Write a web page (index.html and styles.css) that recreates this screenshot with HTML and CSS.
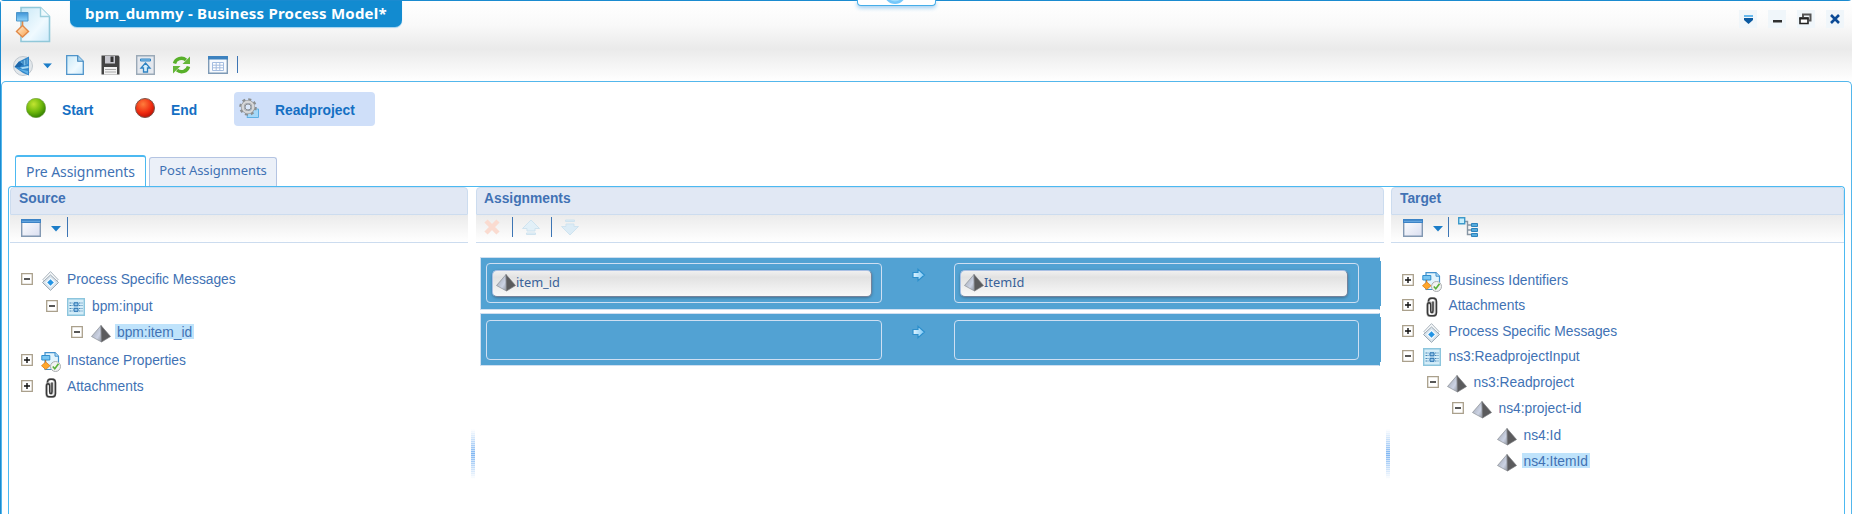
FILE: index.html
```html
<!DOCTYPE html>
<html lang="en">
<head>
<meta charset="utf-8">
<title>bpm_dummy - Business Process Model</title>
<link rel="stylesheet" href="styles.css">
</head>
<body>
<svg class="defs" width="0" height="0">
<defs>
<linearGradient id="paper" x1="0" y1="0" x2="1" y2="1"><stop offset="0" stop-color="#c9e8f6"/><stop offset=".6" stop-color="#f0faff"/><stop offset="1" stop-color="#cdeafa"/></linearGradient>
<linearGradient id="blue" x1="0" y1="0" x2="0" y2="1"><stop offset="0" stop-color="#3f93d6"/><stop offset="1" stop-color="#8fd5fb"/></linearGradient>
<linearGradient id="orange" x1="0" y1="0" x2="1" y2="1"><stop offset="0" stop-color="#fff0d8"/><stop offset="1" stop-color="#f9a04a"/></linearGradient>
<linearGradient id="face" x1="0" y1="0" x2="1" y2="1"><stop offset="0" stop-color="#9aa0aa"/><stop offset=".65" stop-color="#ccd3e4"/><stop offset="1" stop-color="#8d929c"/></linearGradient>
<linearGradient id="winfill" x1="0" y1="0" x2="1" y2="1"><stop offset="0" stop-color="#fff"/><stop offset="1" stop-color="#d9def0"/></linearGradient>
<radialGradient id="green" cx=".38" cy=".3" r=".75"><stop offset="0" stop-color="#c3e531"/><stop offset=".55" stop-color="#6fb80c"/><stop offset="1" stop-color="#2c7a00"/></radialGradient>
<radialGradient id="red" cx=".4" cy=".3" r=".75"><stop offset="0" stop-color="#ff7d3c"/><stop offset=".6" stop-color="#f02c10"/><stop offset="1" stop-color="#b50d04"/></radialGradient>
<linearGradient id="arrowfill"><stop offset="0" stop-color="#e0f4ff"/><stop offset="1" stop-color="#7cc8f6"/></linearGradient>
<symbol id="pyramid" viewBox="0 0 20 18"><path d="M10 .5 .5 11.500 10.500 17z" fill="url(#face)" stroke="#8b8f96" stroke-width=".7"/><path d="M10 .5 19.500 11.500 10.500 17z" fill="#5b5b5d" stroke="#77797d" stroke-width=".7"/></symbol>
<symbol id="plus" viewBox="0 0 12 12"><path d="M.7.7h10.600v10.600H.7z" fill="#fff" stroke="#aaa08c" stroke-width="1.300"/><path d="M3 6h6M6 3v6" stroke="#111" stroke-width="1.400"/></symbol>
<symbol id="minus" viewBox="0 0 12 12"><path d="M.7.7h10.600v10.600H.7z" fill="#fff" stroke="#aaa08c" stroke-width="1.300"/><path d="M3 6h6" stroke="#111" stroke-width="1.400"/></symbol>
<symbol id="message" viewBox="0 0 20 20"><path d="M9.500 .6 17 8.500 9.500 16 2 8.500z" fill="#f7f9fa" stroke="#a9b3bc"/><path d="M9.500 4 17.500 11.500 9.500 19.300 1.500 11.500z" fill="#dfe8ef" stroke="#94a2af"/><path d="M9.500 6 15 11.500 9.500 17 4 11.500z" fill="#f6fbff" stroke="#d0dbe4" stroke-width=".7"/><path d="M9.500 8.200 12.800 11.500 9.500 14.800 6.200 11.500z" fill="#2494e4"/></symbol>
<symbol id="part" viewBox="0 0 18 18"><path d="M.7.7h16.600v16.600H.7z" fill="#d5edf8" stroke="#8cc5dd" stroke-width="1.400"/><path d="M2.500 5h13M2.500 7.500h13M2.500 10.500h13M2.500 13h13" stroke="#4687b8" stroke-width="1.100" stroke-dasharray="2 1"/><path d="M6 3.500h6v11H6z" fill="#c5e2f4"/><path d="M7 4.800h4v3H7zM7 10.300h4v3H7z" fill="#9bc9eb" stroke="#246ead"/></symbol>
<symbol id="clip" viewBox="0 0 20 20"><path d="M6.500 6V4Q7 1 10 1h1q3 0 3 3v12q0 3-3 3H8.500Q5.500 19 5.500 15.500V8q0-2.500 2-2.500T9.500 8v6q0 1.500 .8 1.500T11 14V4.500" fill="none" stroke="#b5b5b5" stroke-width="2.500"/><path d="M6.500 4.500Q6.500 1.200 9.500 1.200h1.500q3.500 0 3.500 3.500v10.800q0 3.300-3 3.300H8.500q-3 0-3-3.300V8q0-2.200 1.500-2.200T8.600 8v5.500q0 2 1.200 2t1.200-2V4.500" fill="none" stroke="#383838" stroke-width="1.400"/></symbol>
<symbol id="props" viewBox="0 0 20 20"><path d="M4 .7h10l3.500 3.500v13.300H4z" fill="#e2f4fd" stroke="#4291cd" stroke-width="1.200"/><path d="M14 .7v3.500h3.500" fill="#bbe1f7" stroke="#4291cd"/><path d="M.8 3.500h8V8h-8z" fill="#79c6f2" stroke="#308dcc"/><path d="M4.700 8v3" fill="none" stroke="#b86b20"/><path d="M4.700 10 9 13.700 4.700 17.500 .5 13.700z" fill="#ffa72c" stroke="#dd7c1c" stroke-width=".8"/><circle cx="14.500" cy="14.500" r="5" fill="#f2f2f2" stroke="#a9adaf"/><path d="m11.800 14.500 2 2.300 3.700-5" fill="none" stroke="#59b13a" stroke-width="1.600"/></symbol>
<symbol id="window" viewBox="0 0 20 18"><path d="M.7.700h18.600v16.600H.7z" fill="url(#winfill)" stroke="#8298b2" stroke-width="1.400"/><path d="M0 0h20v4H0z" fill="#3c83c6"/><path d="M1 2.300h18" stroke="#6eaee4"/></symbol>
<symbol id="caret" viewBox="0 0 10 6"><path d="M0 0h10L5 5.500z" fill="#1c7dc8"/></symbol>
<symbol id="arrow" viewBox="0 0 14 14"><path d="M1 4.500h5V1.300L12.500 7 6 12.700V9.500H1z" fill="url(#arrowfill)" stroke="#2d8fcc" stroke-width="1.200"/></symbol>
</defs>
</svg>
<div class="app">
  <header class="head">
    <div class="head-main">
      <svg class="doc-logo" width="37" height="38" viewBox="0 0 37 38"><path d="M6 1.500h19.500l9 9V35.500H6z" fill="url(#paper)" stroke="#91c8d9" stroke-width="1.600"/><path d="M25.500 1.500v9h9" fill="#eef9fd" stroke="#9ccfdd" stroke-width="1.400"/><path d="M7.500 15v7" stroke="#e18a49" stroke-width="1.600"/><path d="M1.500 6.500h11.500v8.500H1.500z" fill="url(#blue)" stroke="#4e96ca"/><path d="M7.500 19.500 13.500 25.500 7.500 31 1.500 25.500z" fill="url(#orange)" stroke="#e18a49" stroke-width="1.400"/></svg>
      <h1 class="title">bpm_dummy - Business Process Model*</h1>
      <div class="handle"><svg width="20" height="5" viewBox="0 0 20 5"><circle cx="10" cy="-7" r="11" fill="#74c7fa"/><circle cx="10" cy="-7" r="8.500" fill="#9bdafc"/></svg></div>
      <div class="win-tools">
        <svg width="18" height="18" viewBox="0 0 18 18"><path d="M5 5h9v2H5z" fill="#68b8ec"/><path d="M5 8h9v2l-4.500 4L5 10z" fill="#0a59a0"/></svg>
        <svg width="18" height="18" viewBox="0 0 18 18"><path d="M5 10h9v2.500H5z" fill="#303030"/></svg>
        <svg width="18" height="18" viewBox="0 0 18 18"><path d="M6 7V4.500h7.500v6H12" fill="none" stroke="#555" stroke-width="2"/><path d="M3 8h8v5.500H3z" fill="#fff" stroke="#222" stroke-width="1.600"/><path d="M2.500 8.500h9" stroke="#222" stroke-width="2"/></svg>
        <svg width="18" height="18" viewBox="0 0 18 18"><path d="m5 5 8 8M13 5l-8 8" stroke="#0b4a96" stroke-width="2.600"/></svg>
      </div>
    </div>
    <div class="tools">
      <svg class="t-logo" width="20" height="20" viewBox="0 0 20 20"><circle cx="10" cy="10" r="9.500" fill="#e2e7eb" stroke="#bfc7ce"/><path d="M1.500 11 6 5.500 16 .5V19.500L10 17z" fill="#3286c9"/><path d="M1.500 11 6 5.500 10 8 7 11z" fill="#1c66a9"/><path d="M8 6 14.500 2.500V8L11 9.500z" fill="#79bfe9"/><path d="M7 11.500 15.500 10v2L9.500 13z" fill="#a9dbf5"/><path d="M4.500 12.500 15 15v3z" fill="#5fb1e6"/><path d="M10 4.500v5M13 3v5.500" stroke="#1c66a9"/></svg>
      <svg class="t-caret" width="9" height="6" viewBox="0 0 10 6"><use href="#caret"/></svg>
      <svg class="t-new" width="18" height="20" viewBox="0 0 18 20"><path d="M.7.7h11l5.600 5.600v13H.7z" fill="url(#paper)" stroke="#4f94ca" stroke-width="1.300"/><path d="M11.700.700v5.600h5.600" fill="#a8d2ee" stroke="#4287bd" stroke-width="1.100"/></svg>
      <svg class="t-save" width="19" height="20" viewBox="0 0 19 20"><path d="M.5.500h17l1 1.500v17.500H.5z" fill="#444"/><path d="M4 1h10v7.500H4z" fill="#c8c8cf"/><path d="M9.500 1.500h3V7h-3z" fill="#333"/><path d="M3 12h13v7.500H3z" fill="#f2f2f2"/><path d="M4 14.500h11M4 17h11" stroke="#aaa"/></svg>
      <svg class="t-up" width="19" height="20" viewBox="0 0 19 20"><path d="M.7.7h17.600v18.600H.7z" fill="#e4e8ee" stroke="#9aa9b7" stroke-width="1.400"/><path d="M4.500 4h10v2h-10z" fill="#8cc6ef" stroke="#3587c5"/><path d="m9.500 8 4.500 5h-2.500v4h-4v-4H5z" fill="#d8f0fd" stroke="#2e82c2" stroke-width="1.300"/></svg>
      <svg class="t-refresh" width="19" height="18" viewBox="0 0 19 18"><path d="M2.500 7.500A7 6.500 0 0 1 14 4" fill="none" stroke="#58b02a" stroke-width="3.400"/><path d="M18 .5V8h-7.500z" fill="#65b739"/><path d="M16.500 10.500A7 6.500 0 0 1 5 14" fill="none" stroke="#58b02a" stroke-width="3.400"/><path d="M1 17.500V10h7.500z" fill="#65b739"/></svg>
      <svg class="t-cal" width="20" height="18" viewBox="0 0 20 18"><path d="M.7.700h18.600v16.600H.7z" fill="#f7fafe" stroke="#7e9ab6" stroke-width="1.400"/><path d="M0 0h20v3.500H0z" fill="#3d82bf"/><path d="M4.500 6.500h11v8h-11zM8.200 6.500v8M11.800 6.500v8M4.500 9.200h11M4.500 11.800h11" fill="#fff" stroke="#a4bde0"/></svg>
      <i class="sep"></i>
    </div>
  </header>
  <main class="body">
    <nav class="steps">
      <span class="step start"><svg width="20" height="20"><circle cx="10" cy="10" r="9.700" fill="url(#green)" stroke="#6d9a43" stroke-width=".6"/></svg>Start</span>
      <span class="step end"><svg width="20" height="20"><circle cx="10" cy="10" r="9.500" fill="url(#red)" stroke="#7c554a"/></svg>End</span>
      <span class="step active"><svg width="21" height="21" viewBox="0 0 21 21"><path d="M10 11h9.500v8.500H8z" fill="#a5d8f8" stroke="#5fb0e3"/><circle cx="9" cy="9" r="7.600" fill="none" stroke="#8b8f91" stroke-width="2.400" stroke-dasharray="3 2.970"/><circle cx="9" cy="9" r="5.300" fill="none" stroke="#909294" stroke-width="3.600"/><circle cx="9" cy="9" r="5.300" fill="none" stroke="#d6d7d8" stroke-width="2.400"/><circle cx="9" cy="9" r="3" fill="#dbe8fa" stroke="#8d8f91"/></svg>Readproject</span>
    </nav>
    <div class="tabs"><span class="tab on">Pre Assignments</span><span class="tab">Post Assignments</span></div>
    <div class="panels">
      <section class="panel source">
        <h2>Source</h2>
        <div class="bar"><svg class="b-win" width="20" height="18"><use href="#window"/></svg><svg class="b-caret" width="10" height="6"><use href="#caret"/></svg><i class="sep"></i></div>
        <ul class="tree">
          <li class="r27"><svg class="ex"><use href="#minus"/></svg><svg class="ic"><use href="#message"/></svg><span>Process Specific Messages</span></li>
          <li class="l1 r26"><svg class="ex"><use href="#minus"/></svg><svg class="ic part"><use href="#part"/></svg><span>bpm:input</span></li>
          <li class="l2 r28"><svg class="ex"><use href="#minus"/></svg><svg class="ic pyr"><use href="#pyramid"/></svg><span class="sel">bpm:item_id</span></li>
          <li class="r26"><svg class="ex"><use href="#plus"/></svg><svg class="ic"><use href="#props"/></svg><span>Instance Properties</span></li>
          <li class="r26"><svg class="ex"><use href="#plus"/></svg><svg class="ic"><use href="#clip"/></svg><span>Attachments</span></li>
        </ul>
      </section>
      <div class="split"><i></i></div>
      <section class="panel assign">
        <h2>Assignments</h2>
        <div class="bar">
          <svg class="b-del" width="16" height="16" viewBox="0 0 16 16"><path d="m2 2 12 12M14 2 2 14" stroke="#fadbd0" stroke-width="4.500"/></svg><i class="sep"></i>
          <svg class="b-up" width="20" height="17" viewBox="0 0 20 17"><path d="m10 1 8.500 8.500H14V12H6V9.500H1.500zM5.500 14h9v1.500h-9z" fill="#e2f0f8" stroke="#cfe3ef"/></svg><i class="sep"></i>
          <svg class="b-down" width="20" height="17" viewBox="0 0 20 17"><path d="m10 16 8.500-8.500H14V5H6v2.500H1.500zM5.500 1h9v1.500h-9z" fill="#dcecf6" stroke="#cfe3ef"/></svg>
        </div>
        <div class="rows">
          <div class="map"><div class="slot"><div class="pill"><svg width="20" height="18"><use href="#pyramid"/></svg>item_id</div></div><svg class="arr" width="14" height="14"><use href="#arrow"/></svg><div class="slot to"><div class="pill"><svg width="20" height="18"><use href="#pyramid"/></svg>ItemId</div></div></div>
          <div class="map empty"><div class="slot"></div><svg class="arr" width="14" height="14"><use href="#arrow"/></svg><div class="slot to"></div></div>
        </div>
      </section>
      <div class="split narrow"><i></i></div>
      <section class="panel target">
        <h2>Target</h2>
        <div class="bar"><svg class="b-win" width="20" height="18"><use href="#window"/></svg><svg class="b-caret" width="10" height="6"><use href="#caret"/></svg><i class="sep"></i><svg class="b-tree" width="20" height="20" viewBox="0 0 20 20"><path d="M7 4.500h2.500v13H14M9.500 8H14M9.500 13H14" fill="none" stroke="#8594a2" stroke-width="1.400"/><path d="M.700.700h6v6h-6z" fill="#c7effd" stroke="#3d99ca" stroke-width="1.400"/><path d="M13.500 6.500h6v3h-6zM13.500 11.500h6v3h-6zM13.500 16.500h6v3h-6z" fill="#55abdc" stroke="#2e83bd"/></svg></div>
        <ul class="tree">
          <li class="r25"><svg class="ex"><use href="#plus"/></svg><svg class="ic"><use href="#props"/></svg><span>Business Identifiers</span></li>
          <li class="r26"><svg class="ex"><use href="#plus"/></svg><svg class="ic"><use href="#clip"/></svg><span>Attachments</span></li>
          <li class="r25"><svg class="ex"><use href="#plus"/></svg><svg class="ic"><use href="#message"/></svg><span>Process Specific Messages</span></li>
          <li class="r26"><svg class="ex"><use href="#minus"/></svg><svg class="ic part"><use href="#part"/></svg><span>ns3:ReadprojectInput</span></li>
          <li class="l1 r26"><svg class="ex"><use href="#minus"/></svg><svg class="ic pyr"><use href="#pyramid"/></svg><span>ns3:Readproject</span></li>
          <li class="l2 r27"><svg class="ex"><use href="#minus"/></svg><svg class="ic pyr"><use href="#pyramid"/></svg><span>ns4:project-id</span></li>
          <li class="l3 r26"><svg class="ex"></svg><svg class="ic pyr"><use href="#pyramid"/></svg><span>ns4:Id</span></li>
          <li class="l3 r26"><svg class="ex"></svg><svg class="ic pyr"><use href="#pyramid"/></svg><span class="sel">ns4:ItemId</span></li>
        </ul>
      </section>
    </div>
  </main>
</div>
</body>
</html>
```
FILE: styles.css
```css
* { box-sizing: border-box; }
body { margin: 0; background: #fff; overflow: hidden; font: 13.8px "Liberation Sans", Arial, sans-serif; color: #4172b4; }
svg { display: block; flex: none; }
.defs { position: absolute; }
.app { height: 514px; border-top: 1px solid #1b8bd0; border-left: 1px solid #1b8bd0; border-radius: 4px 4px 0 0; display: flex; flex-direction: column; }
.head { height: 80px; background: linear-gradient(#fff 0, #f9f9f9 30%, #eaeaea 60%, #f2f2f2 75%, #fff 100%); }
.head-main { display: flex; height: 50px; position: relative; }
.doc-logo { margin: 5px 0 0 14px; }
.title { margin: 0 0 0 18px; width: 332px; height: 26px; border-radius: 0 0 7px 7px; background: #128bd0; color: #fff; font: bold 15px/25px "Noto Sans", sans-serif; letter-spacing: .22px; padding-left: 15px; white-space: nowrap; box-shadow: 0 1px 1px #9fd2f0; }
.handle { position: absolute; left: 856px; top: -1px; width: 79px; height: 6px; background: #fff; border: 1px solid #46aee9; border-top: 0; border-radius: 0 0 4px 4px; box-shadow: 0 2px 4px #9fcdf0; padding-left: 27px; }
.win-tools { margin-left: auto; display: flex; gap: 11px; padding: 9px 8px 0 0; }
.win-tools svg { background: #f0f6fa; }
.tools { display: flex; height: 30px; align-items: flex-start; }
.t-logo { margin: 5px 0 0 12px; }
.t-caret { margin: 12px 0 0 10px; }
.t-new { margin: 4px 0 0 14px; }
.t-save { margin: 4px 0 0 17px; }
.t-up { margin: 4px 0 0 16px; }
.t-refresh { margin: 5px 0 0 17px; }
.t-cal { margin: 5px 0 0 17px; }
.sep { width: 1px; height: 20px; background: #3d75b4; flex: none; }
.tools .sep { margin: 5px 0 0 9px; height: 17px; }
.body { flex: 1; min-height: 0; border: 1px solid #53b7ec; border-bottom: 0; border-radius: 5px 5px 0 0; background: #fff; display: flex; flex-direction: column; }
.steps { display: flex; height: 73px; padding: 10px 0 0 24px; font-weight: bold; color: #146fc3; }
.step { display: flex; height: 34px; line-height: 38px; }
.step svg { margin-top: 6px; }
.start { width: 109px; gap: 16px; }
.end { width: 99px; gap: 16px; }
.active { width: 141px; background: #cfdff9; border-radius: 4px; gap: 15px; padding-left: 5px; }
.tabs { display: flex; align-items: flex-end; gap: 3px; padding-left: 13px; height: 31px; font: 13px "Noto Sans", sans-serif; letter-spacing: -.08px; }
.tab { border: 1px solid #b4c4e2; border-bottom: 0; background: #ebf0f8; border-radius: 3px 3px 0 0; width: 128px; height: 29px; line-height: 24px; text-align: center; white-space: nowrap; }
.tab.on { border: 1px solid #4cb9f1; border-top-width: 2px; border-bottom: 0; background: #fff; width: 131px; height: 31px; line-height: 30px; font-size: 14px; }
.panels { flex: 1; min-height: 0; margin: 0 6px; border: 1px solid #4cb9f1; border-bottom: 0; border-radius: 4px 4px 0 0; display: flex; padding-left: 1px; }
.panel h2 { margin: 0; height: 28px; background: #e1e8f4; border: 1px solid #ccdcef; border-radius: 4px 4px 0 0; font: bold 13.8px/22px "Liberation Sans", Arial, sans-serif; padding-left: 8px; }
.source { width: 458px; }
.assign { width: 908px; }
.assign h2 { padding-left: 7px; }
.target { flex: 1; }
.target h2 { padding-left: 8px; }
.bar { height: 28px; background: linear-gradient(#ebebeb, #fff); border-bottom: 1px solid #ccdcef; display: flex; align-items: flex-start; }
.bar .sep { margin-top: 2px; }
.b-win { margin: 4px 0 0 11px; }
.b-caret { margin: 11px 6px 0 10px; }
.target .b-win { margin-left: 12px; }
.target .b-caret { margin-right: 5px; }
.b-tree { margin: 2px 0 0 9px; }
.b-del { margin: 4px 12px 0 8px; }
.b-up { margin: 4px 10px 0 9px; }
.assign .sep + .b-up { margin-left: 8px; }
.b-down { margin: 4px 0 0 8px; }
.split { width: 8px; padding: 242px 0 0 3px; }
.split.narrow { width: 7px; padding-left: 2px; }
.split i { display: block; width: 4px; height: 50px; background: repeating-linear-gradient(#fff0 0 1px, #fff8 1px 2px), linear-gradient(#fff, #7db5f2 50%, #fff); }
.tree { list-style: none; margin: 0; padding: 23px 0 0 11px; }
.tree li { display: flex; height: 26px; white-space: nowrap; }
.target .tree { padding: 24px 0 0 11px; }
.tree .r25 { height: 25px; }
.tree .r27 { height: 27px; }
.tree .r28 { height: 28px; }
.tree .l1 { padding-left: 25px; }
.tree .l2 { padding-left: 50px; }
.tree .l3 { padding-left: 75px; }
.ex { width: 12px; height: 12px; margin-top: 7px; }
.ic { width: 20px; height: 20px; margin: 5px 0 0 8px; }
.ic.part { width: 18px; height: 18px; margin: 5px 1px 0 9px; }
.ic.pyr { height: 18px; margin-top: 6px; }
.tree span { height: 15px; line-height: 18px; margin: 5px 0 0 4px; padding: 0 2px; }
.target .tree span { margin-left: 4.5px; }
.tree .sel { background: #bfe3fb; }
.rows { padding: 14px 0 0 4px; }
.map { position: relative; width: 900px; height: 53px; background: #52a2d3; border: 1px solid #cfdff0; border-right-color: #52a2d3; display: flex; padding: 5px 0 0 5px; margin-bottom: 3px; }
.map::after { content: ""; position: absolute; right: -2px; top: 3px; width: 1px; height: 45px; background: #52a2d3; }
.map.empty { padding-top: 6px; }
.slot { width: 396px; height: 40px; border: 1px solid #cfdff2; border-radius: 4px; padding: 6px 0 0 5px; }
.slot.to { width: 405px; }
.arr { margin: 5px 28px 0 30px; }
.pill { width: 380px; height: 27px; border-radius: 5px; border: 1px solid #a9c0e4; border-right-color: #74829b; border-bottom: 1px solid #74829b; background: linear-gradient(#f0f0f0, #e2e2e2 25%, #f8f8f8); box-shadow: 0 1px 3px #3e7395; display: flex; font: 12.8px/23px "Noto Sans", sans-serif; padding: 0 0 0 3px; color: #3a6299; }
.pill svg { margin-top: 3px; }
.to .pill { width: 388px; }
```
